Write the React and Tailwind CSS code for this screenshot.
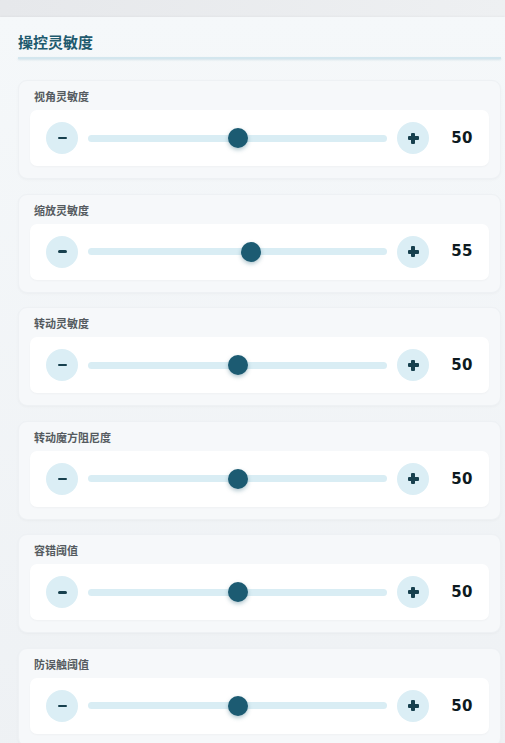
import React, { useState } from 'react';

const items = [
  { label: '视角灵敏度', value: 50 },
  { label: '缩放灵敏度', value: 55 },
  { label: '转动灵敏度', value: 50 },
  { label: '转动魔方阻尼度', value: 50 },
  { label: '容错阈值', value: 50 },
  { label: '防误触阈值', value: 50 },
];

function SliderRow({ label, initial }) {
  const [v, setV] = useState(initial);
  return (
    <div className="rounded-[9px] bg-[#f6f8fa] border border-[#eef1f4] px-[11px] pt-[8px] pb-[12px] shadow-[0_1px_3px_rgba(0,0,0,0.03)]">
      <div className="pl-[4px] text-[11px] leading-[14px] font-bold text-[#555b60] mb-[7px]">{label}</div>
      <div className="h-[56px] rounded-[7px] bg-white flex items-center pl-[16px] pr-[7px] shadow-[0_1px_2px_rgba(0,0,0,0.03)]">
        <button
          onClick={() => setV(Math.max(0, v - 1))}
          className="w-[32px] h-[32px] shrink-0 rounded-full bg-[#dbeef5] flex items-center justify-center"
        >
          <span className="block w-[9px] h-[2.5px] rounded-full bg-[#17404e]" />
        </button>
        <div className="flex-1 mx-[10px] relative h-[20px] flex items-center">
          <div className="w-full h-[7px] rounded-full bg-[#d9edf4]" />
          <div
            className="absolute top-0 w-[20px] h-[20px] rounded-full bg-[#1c5b72] shadow-[0_2px_4px_rgba(28,91,114,0.35)]"
            style={{ left: `calc(${v}% - ${v * 0.2}px)` }}
          />
        </div>
        <button
          onClick={() => setV(Math.min(100, v + 1))}
          className="w-[32px] h-[32px] shrink-0 rounded-full bg-[#dbeef5] flex items-center justify-center relative"
        >
          <span className="absolute w-[11px] h-[4px] rounded-[1px] bg-[#17404e]" />
          <span className="absolute w-[4px] h-[11px] rounded-[1px] bg-[#17404e]" />
        </button>
        <span className="ml-[13px] w-[40px] text-center text-[15px] font-black tracking-[0.3px] text-[#0d1a20] font-['DejaVu_Sans',sans-serif]">
          {v}
        </span>
      </div>
    </div>
  );
}

export default function App() {
  return (
    <div className="min-h-screen bg-[#eceff2] font-['Noto_Sans_CJK_SC','Noto_Sans',sans-serif] overflow-hidden">
      <div className="h-[17px] bg-gradient-to-r from-[#e6e8eb] to-[#eef0f2]" />
      <div className="bg-gradient-to-b from-[#f5f8fa] to-[#eef1f4] pl-[18px] pr-[4px] pt-[14px] pb-[20px] min-h-[726px] shadow-[0_-1px_2px_rgba(0,0,0,0.03)]">
        <h2 className="text-[15px] leading-[22px] font-bold text-[#1e5a6e] pb-[4px]">操控灵敏度</h2>
        <div className="h-[2px] bg-[#d3e6ee] shadow-[0_1px_2px_rgba(120,170,190,0.25)]" />
        <div className="mt-[21px] flex flex-col gap-[14.6px]">
          {items.map((it) => (
            <SliderRow key={it.label} label={it.label} initial={it.value} />
          ))}
        </div>
      </div>
    </div>
  );
}
